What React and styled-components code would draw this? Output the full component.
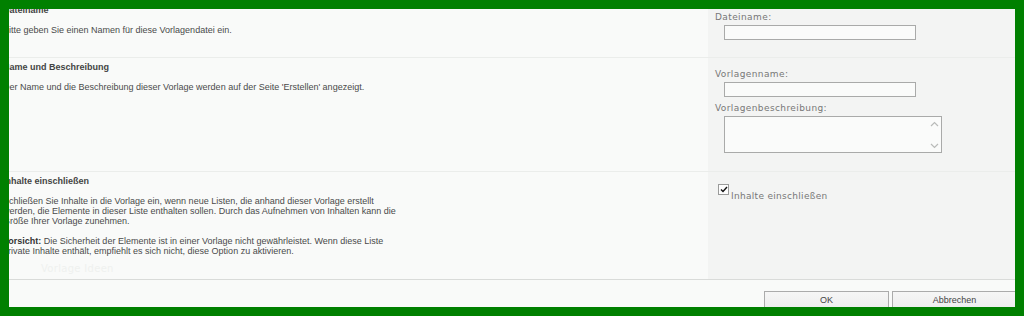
import React from 'react'
import styled, { createGlobalStyle } from 'styled-components'

const GlobalStyle = createGlobalStyle`
  html, body {
    margin: 0;
    padding: 0;
    background: #008000;
  }
`

const Frame = styled.div`
  box-sizing: border-box;
  width: 1024px;
  height: 316px;
  border: 9px solid #008000;
  background: #f9faf9;
  overflow: hidden;
`

const Form = styled.div`
  width: 1024px;
  margin: -8px 0 0 -6px;
  font-family: "Liberation Sans", Arial, sans-serif;
`

const Section = styled.div`
  display: grid;
  grid-template-columns: 705px 1fr;
  height: ${p => p.h}px;
  border-bottom: 1px solid ${p => (p.strong ? '#d9dbd9' : '#ebedeb')};
`

const Info = styled.div`
  padding-top: 3px;
`

const Title = styled.h3`
  margin: 0;
  font-size: 9px;
  line-height: 12px;
  font-weight: bold;
  color: #444;
`

const Desc = styled.p`
  margin: ${p => (p.first ? 9 : 10)}px 0 0;
  width: 397px;
  font-size: 9px;
  line-height: 10px;
  color: #4a4a4a;

  b {
    color: #333;
  }
`

const Ghost = styled.div`
  margin: 7px 0 0 38px;
  font-family: "DejaVu Sans", Verdana, sans-serif;
  font-size: 10px;
  line-height: 12px;
  letter-spacing: 0.3px;
  color: #eff1ef;
`

const Controls = styled.div`
  background: #f3f4f3;
  padding: ${p => p.top}px 0 0 7px;
  display: flex;
  flex-direction: column;
  align-items: flex-start;
`

const Label = styled.label`
  font-family: "DejaVu Sans", Verdana, sans-serif;
  font-size: 9px;
  line-height: 12px;
  letter-spacing: 0.4px;
  color: #777;
  margin-top: ${p => p.gap || 0}px;
`

const TextInput = styled.input`
  box-sizing: border-box;
  width: 192px;
  height: 15px;
  margin: 2px 0 0 9px;
  border: 1px solid #a9aaa9;
  background: #fafbfa;
  padding: 0 2px;
  outline: none;
`

const AreaBox = styled.div`
  box-sizing: border-box;
  width: 218px;
  height: 37px;
  margin: 2px 0 0 9px;
  border: 1px solid #a9aaa9;
  background: #fafbfa;
  display: flex;
`

const Area = styled.textarea`
  flex: 1;
  border: 0;
  background: transparent;
  resize: none;
  outline: none;
`

const Arrows = styled.div`
  width: 14px;
  display: flex;
  flex-direction: column;
  justify-content: space-between;
  align-items: center;
  padding: 4px 0 3px;
`

const CheckRow = styled.div`
  display: flex;
  align-items: flex-start;
  margin-left: 3px;
`

const Box = styled.span`
  box-sizing: border-box;
  width: 11px;
  height: 11px;
  border: 1px solid #9a9b9a;
  background: #fdfdfd;
  display: flex;
  align-items: center;
  justify-content: center;
`

const CheckText = styled.span`
  font-family: "DejaVu Sans", Verdana, sans-serif;
  font-size: 9px;
  line-height: 12px;
  letter-spacing: 0.3px;
  color: #777;
  margin: 6px 0 0 2px;
`

const Buttons = styled.div`
  display: flex;
  justify-content: flex-end;
  gap: 3px;
  padding: 11px 10px 0 0;
`

const Button = styled.button`
  box-sizing: border-box;
  width: 125px;
  height: 22px;
  padding: 0 0 4px;
  border: 1px solid #ababab;
  background: linear-gradient(#f6f6f6, #ebebeb);
  font-family: "Liberation Sans", Arial, sans-serif;
  font-size: 9px;
  line-height: 15px;
  color: #444;
`

const Chevron = ({ up }) => (
  <svg width="9" height="6" viewBox="0 0 9 6" fill="none" stroke="#b9bbb9" strokeWidth="1.2">
    <path d={up ? 'M1 5 L4.5 1.5 L8 5' : 'M1 1 L4.5 4.5 L8 1'} />
  </svg>
)

const App = () => {
  return (
    <Frame>
      <GlobalStyle />
      <Form>
        <Section h={56}>
          <Info>
            <Title>Dateiname</Title>
            <Desc first>Bitte geben Sie einen Namen für diese Vorlagendatei ein.</Desc>
          </Info>
          <Controls top={10}>
            <Label>Dateiname:</Label>
            <TextInput />
          </Controls>
        </Section>

        <Section h={113}>
          <Info>
            <Title>Name und Beschreibung</Title>
            <Desc first>Der Name und die Beschreibung dieser Vorlage werden auf der Seite 'Erstellen' angezeigt.</Desc>
          </Info>
          <Controls top={10}>
            <Label>Vorlagenname:</Label>
            <TextInput />
            <Label gap={5}>Vorlagenbeschreibung:</Label>
            <AreaBox>
              <Area />
              <Arrows>
                <Chevron up />
                <Chevron />
              </Arrows>
            </AreaBox>
          </Controls>
        </Section>

        <Section h={107} strong>
          <Info>
            <Title>Inhalte einschließen</Title>
            <Desc first>
              Schließen Sie Inhalte in die Vorlage ein, wenn neue Listen, die anhand dieser Vorlage erstellt
              werden, die Elemente in dieser Liste enthalten sollen. Durch das Aufnehmen von Inhalten kann die
              Größe Ihrer Vorlage zunehmen.
            </Desc>
            <Desc>
              <b>Vorsicht:</b> Die Sicherheit der Elemente ist in einer Vorlage nicht gewährleistet. Wenn diese Liste
              private Inhalte enthält, empfiehlt es sich nicht, diese Option zu aktivieren.
            </Desc>
            <Ghost>Vorlage Ideen</Ghost>
          </Info>
          <Controls top={12}>
            <CheckRow>
              <Box>
                <svg width="8" height="7" viewBox="0 0 8 7" fill="none" stroke="#111" strokeWidth="1.4">
                  <path d="M1 3.5 L3 5.5 L7 1" />
                </svg>
              </Box>
              <CheckText>Inhalte einschließen</CheckText>
            </CheckRow>
          </Controls>
        </Section>

        <Buttons>
          <Button>OK</Button>
          <Button>Abbrechen</Button>
        </Buttons>
      </Form>
    </Frame>
  )
}

export default App
